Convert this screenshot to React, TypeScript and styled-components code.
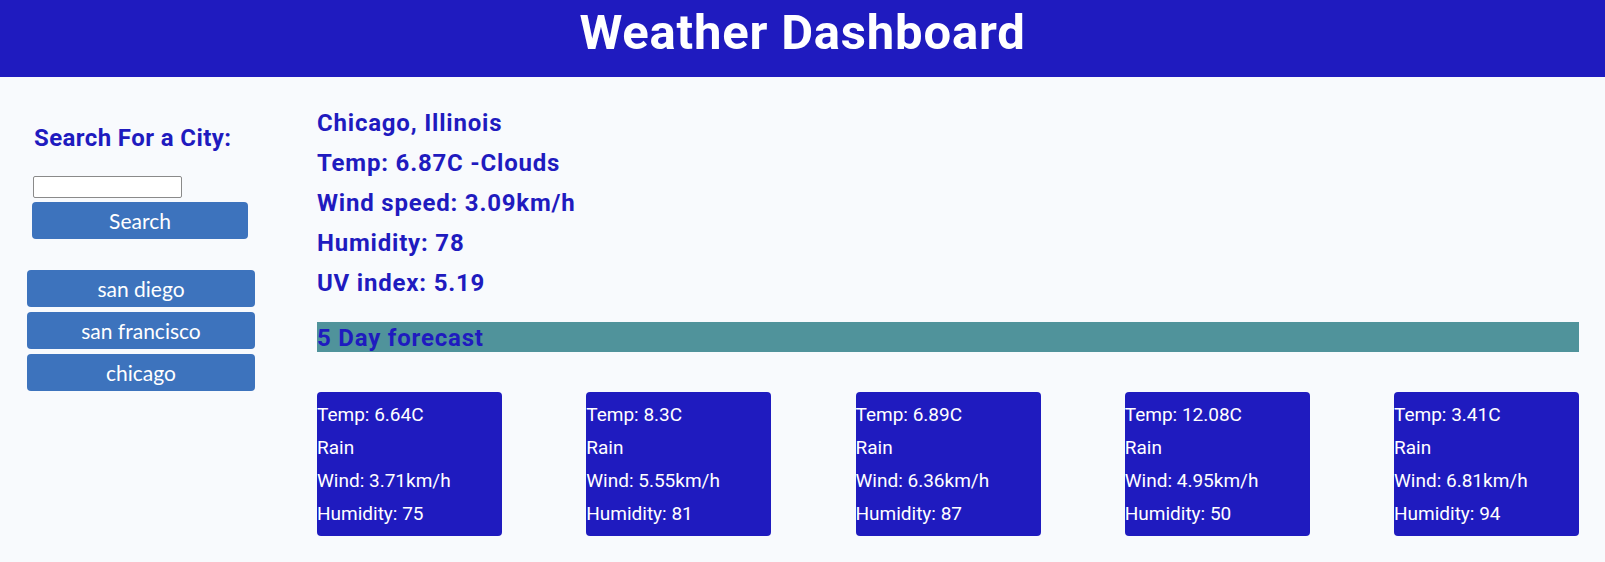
import styled, { createGlobalStyle } from 'styled-components';

const GlobalStyle = createGlobalStyle`
  body {
    margin: 0;
    background: #f8fafd;
    font-family: Roboto, "Liberation Sans", sans-serif;
  }
`;

const forecast = [
  { temp: '6.64C', desc: 'Rain', wind: '3.71km/h', humidity: 75 },
  { temp: '8.3C', desc: 'Rain', wind: '5.55km/h', humidity: 81 },
  { temp: '6.89C', desc: 'Rain', wind: '6.36km/h', humidity: 87 },
  { temp: '12.08C', desc: 'Rain', wind: '4.95km/h', humidity: 50 },
  { temp: '3.41C', desc: 'Rain', wind: '6.81km/h', humidity: 94 },
];

const history = ['san diego', 'san francisco', 'chicago'];

const Header = styled.header`
  height: 77px;
  background: #1f1bbf;
  display: flex;
  justify-content: center;
`;

const Title = styled.h1`
  margin: 0;
  padding-top: 4px;
  font-size: 49px;
  line-height: 58px;
  letter-spacing: 0.8px;
  font-weight: 700;
  color: #ffffff;
`;

const Layout = styled.div`
  display: grid;
  grid-template-columns: 317px 1fr;
  padding-right: 26px;
`;

const Sidebar = styled.aside`
  padding: 46px 0 0 27px;
`;

const SearchTitle = styled.h3`
  margin: 0 0 0 7px;
  font-size: 24px;
  line-height: 30px;
  letter-spacing: 0.4px;
  font-weight: 700;
  color: #1f1bbf;
`;

const SearchForm = styled.form`
  margin: 23px 0 0 5px;
  display: flex;
  flex-direction: column;
  align-items: flex-start;
  gap: 4px;
`;

const CityInput = styled.input`
  width: 145px;
  height: 18px;
  margin-left: 1px;
  padding: 1px;
  border: 1px solid #8a8a8a;
  border-radius: 2px;
  background: #ffffff;
`;

const Button = styled.button<{ $wide?: boolean }>`
  width: ${({ $wide }) => ($wide ? '228px' : '216px')};
  height: 37px;
  border: none;
  border-radius: 4px;
  background: #3d73bd;
  color: #ffffff;
  font-family: Lato, "Open Sans", sans-serif;
  font-size: 21px;
  cursor: pointer;
`;

const HistoryList = styled.div`
  margin-top: 31px;
  display: flex;
  flex-direction: column;
  gap: 5px;
`;

const Main = styled.main`
  padding-top: 26px;
`;

const CurrentLine = styled.h3`
  margin: 0;
  font-size: 24px;
  line-height: 40px;
  letter-spacing: 0.8px;
  font-weight: 700;
  color: #1f1bbf;
`;

const ForecastBar = styled.h3`
  margin: 19px 0 0;
  height: 30px;
  background: #50939b;
  font-size: 24px;
  line-height: 32px;
  letter-spacing: 0.8px;
  font-weight: 700;
  color: #1f1bbf;
`;

const CardRow = styled.div`
  margin-top: 40px;
  display: flex;
  justify-content: space-between;
`;

const Card = styled.div`
  width: 185px;
  height: 144px;
  box-sizing: border-box;
  padding-top: 6px;
  background: #1f1bbf;
  border-radius: 4px;
  color: #ffffff;
`;

const CardLine = styled.p`
  margin: 0;
  font-size: 19px;
  line-height: 33px;
`;

export default function App() {
  return (
    <>
      <GlobalStyle />
      <Header>
        <Title>Weather Dashboard</Title>
      </Header>
      <Layout>
        <Sidebar>
          <SearchTitle>Search For a City:</SearchTitle>
          <SearchForm onSubmit={(e) => e.preventDefault()}>
            <CityInput type="text" />
            <Button type="submit">Search</Button>
          </SearchForm>
          <HistoryList>
            {history.map((city) => (
              <Button key={city} $wide type="button">
                {city}
              </Button>
            ))}
          </HistoryList>
        </Sidebar>
        <Main>
          <CurrentLine>Chicago, Illinois</CurrentLine>
          <CurrentLine>Temp: 6.87C -Clouds</CurrentLine>
          <CurrentLine>Wind speed: 3.09km/h</CurrentLine>
          <CurrentLine>Humidity: 78</CurrentLine>
          <CurrentLine>UV index: 5.19</CurrentLine>
          <ForecastBar>5 Day forecast</ForecastBar>
          <CardRow>
            {forecast.map((day, i) => (
              <Card key={i}>
                <CardLine>Temp: {day.temp}</CardLine>
                <CardLine>{day.desc}</CardLine>
                <CardLine>Wind: {day.wind}</CardLine>
                <CardLine>Humidity: {day.humidity}</CardLine>
              </Card>
            ))}
          </CardRow>
        </Main>
      </Layout>
    </>
  );
}
